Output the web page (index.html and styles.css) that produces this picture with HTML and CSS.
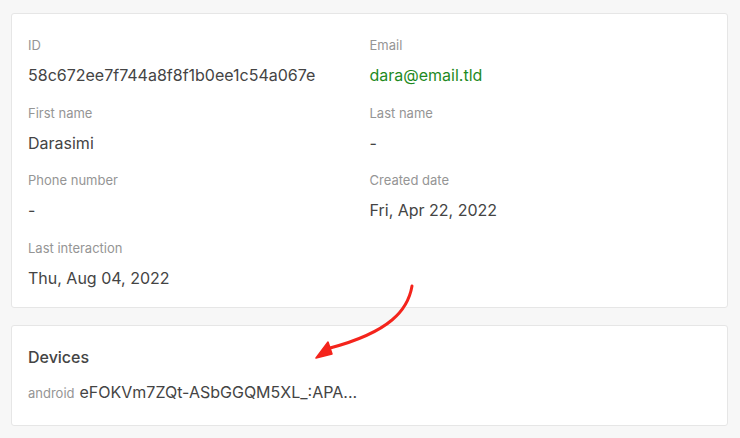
FILE: index.html
```html
<!DOCTYPE html>
<html>
<head>
<meta charset="utf-8">
<link rel="stylesheet" href="styles.css">
</head>
<body>
<div class="page">
  <section class="card details">
    <div class="field">
      <div class="label">ID</div>
      <div class="value">58c672ee7f744a8f8f1b0ee1c54a067e</div>
    </div>
    <div class="field">
      <div class="label">Email</div>
      <div class="value email">dara@email.tld</div>
    </div>
    <div class="field">
      <div class="label">First name</div>
      <div class="value">Darasimi</div>
    </div>
    <div class="field">
      <div class="label">Last name</div>
      <div class="value">-</div>
    </div>
    <div class="field">
      <div class="label">Phone number</div>
      <div class="value">-</div>
    </div>
    <div class="field">
      <div class="label">Created date</div>
      <div class="value">Fri, Apr 22, 2022</div>
    </div>
    <div class="field">
      <div class="label">Last interaction</div>
      <div class="value">Thu, Aug 04, 2022</div>
    </div>
  </section>
  <section class="card devices">
    <h2 class="heading">Devices</h2>
    <div class="device"><span class="platform">android</span><span class="token">eFOKVm7ZQt-ASbGGQM5XL_:APA...</span></div>
  </section>
  <svg class="arrow" width="120" height="90" viewBox="0 0 120 90">
    <path d="M112 16 C108 40 90 62 30 78" fill="none" stroke="#f4241c" stroke-width="3" stroke-linecap="round"/>
    <path d="M16 88 L28 72 L32 84 Z" fill="#f4241c" stroke="#f4241c" stroke-width="1.5" stroke-linejoin="round"/>
  </svg>
</div>
</body>
</html>
```
FILE: styles.css
```css
html, body {
  margin: 0;
  padding: 0;
  background: #f7f7f7;
  font-family: Inter, "Noto Sans", sans-serif;
  color: #444;
}
.page {
  position: relative;
  padding: 13px 12px 0 11px;
  display: flex;
  flex-direction: column;
  gap: 17px;
}
.card {
  background: #fff;
  border: 1px solid #e6e6e6;
  border-radius: 3px;
}
.details {
  display: grid;
  grid-template-columns: 1fr 1fr;
  column-gap: 0;
  row-gap: 15.5px;
  padding: 21px 16px 17px;
}
.field {
  display: flex;
  flex-direction: column;
  gap: 8px;
}
.label {
  font-size: 13px;
  line-height: 20px;
  color: #959595;
}
.value {
  font-size: 16px;
  line-height: 24px;
  color: #444;
}
.value.email {
  color: #1f8a1f;
}
.devices {
  padding: 19px 16px 20px;
  display: flex;
  flex-direction: column;
  gap: 11px;
}
.heading {
  margin: 0;
  font-size: 16px;
  font-weight: 500;
  line-height: 24px;
  color: #444;
}
.device {
  display: flex;
  align-items: baseline;
  gap: 5px;
  line-height: 24px;
}
.platform {
  font-size: 13px;
  color: #959595;
}
.token {
  font-size: 16px;
  color: #444;
}
.arrow {
  position: absolute;
  left: 300px;
  top: 270px;
}
```
